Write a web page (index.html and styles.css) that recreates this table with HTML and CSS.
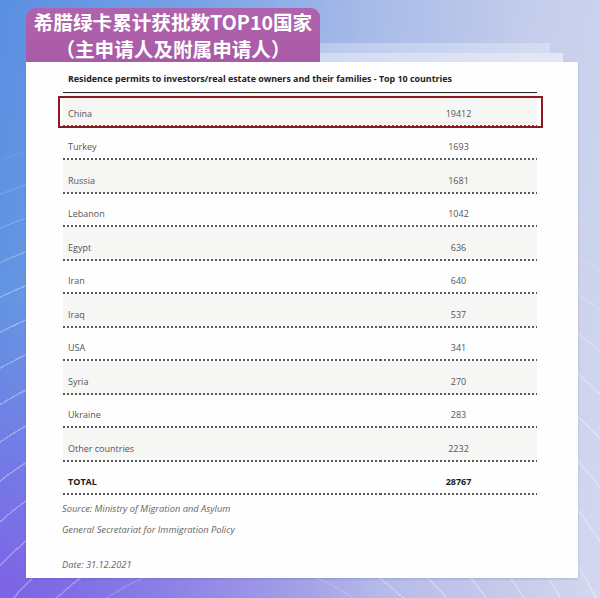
FILE: index.html
```html
<!doctype html>
<html>
  <head>
    <meta charset="UTF-8" />
    <title>希腊绿卡累计获批数TOP10国家</title>
    <link rel="stylesheet" href="styles.css">
  </head>
  <body>
    <div class="page">
      <div class="top">
        <div class="tab">
          <div>希腊绿卡累计获批数TOP10国家</div>
          <div>（主申请人及附属申请人）</div>
        </div>
        <div class="stack">
          <div class="sheet-back"></div>
          <div class="sheet-mid"></div>
        </div>
      </div>
      <div class="card">
        <div class="caption">Residence permits to investors/real estate owners and their families - Top 10 countries</div>
        <div class="table">
          <div class="row shade marked"><div class="cell">China</div><div class="cell num">19412</div></div>
          <div class="row"><div class="cell">Turkey</div><div class="cell num">1693</div></div>
          <div class="row shade"><div class="cell">Russia</div><div class="cell num">1681</div></div>
          <div class="row"><div class="cell">Lebanon</div><div class="cell num">1042</div></div>
          <div class="row shade"><div class="cell">Egypt</div><div class="cell num">636</div></div>
          <div class="row"><div class="cell">Iran</div><div class="cell num">640</div></div>
          <div class="row shade"><div class="cell">Iraq</div><div class="cell num">537</div></div>
          <div class="row"><div class="cell">USA</div><div class="cell num">341</div></div>
          <div class="row shade"><div class="cell">Syria</div><div class="cell num">270</div></div>
          <div class="row"><div class="cell">Ukraine</div><div class="cell num">283</div></div>
          <div class="row shade"><div class="cell">Other countries</div><div class="cell num">2232</div></div>
          <div class="row total"><div class="cell">TOTAL</div><div class="cell num">28767</div></div>
        </div>
        <div class="notes">
          <p>Source: Ministry of Migration and Asylum</p>
          <p>General Secretariat for Immigration Policy</p>
          <p class="date">Date: 31.12.2021</p>
        </div>
      </div>
    </div>
  </body>
</html>
```

FILE: styles.css
```css
html,
body {
  margin: 0;
  width: 600px;
  height: 598px;
  overflow: hidden;
}
body {
  position: relative;
  font-family: "Open Sans", "Noto Sans", Arial, sans-serif;
  background:
    radial-gradient(ellipse 380px 300px at 0% 100%, rgba(126, 92, 230, 0.9), rgba(126, 92, 230, 0) 100%),
    radial-gradient(ellipse 360px 160px at 40% 100%, rgba(170, 160, 228, 0.55), rgba(170, 160, 228, 0) 100%),
    linear-gradient(100deg, #5a8fe2 0%, #79a2e6 28%, #a7bae8 52%, #c4cdeb 76%, #d3d8ef 100%);
}
body::before {
  content: "";
  position: absolute;
  inset: 0;
  background: repeating-radial-gradient(circle at 230px 780px, rgba(255, 255, 255, 0) 0 30px, rgba(255, 255, 255, 0.3) 30px 31.5px);
  -webkit-mask-image: radial-gradient(circle at 230px 780px, transparent 180px, #000 260px, #000 520px, transparent 700px);
  mask-image: radial-gradient(circle at 230px 780px, transparent 180px, #000 260px, #000 520px, transparent 700px);
}
.page {
  position: relative;
  padding: 8px 0 0 26px;
}
.top {
  display: flex;
  align-items: flex-end;
}
.tab {
  width: 294px;
  height: 54px;
  background: linear-gradient(180deg, #b063ad, #a95aa6);
  border-radius: 9px 9px 0 0;
  color: white;
  text-align: center;
  font-family: "Noto Sans CJK SC", "Noto Sans", sans-serif;
  font-weight: 700;
  font-size: 19.6px;
  line-height: 27px;
}
.stack {
  display: flex;
  flex-direction: column;
}
.sheet-back {
  width: 230px;
  height: 10px;
  background: rgba(255, 255, 255, 0.28);
}
.sheet-mid {
  width: 243px;
  height: 9px;
  background: rgba(255, 255, 255, 0.5);
}
.card {
  width: 552px;
  height: 516px;
  box-sizing: border-box;
  padding: 0 41px 0 37px;
  background: #fefefe;
  box-shadow: 0 1px 2px rgba(60, 60, 100, 0.2);
}
.caption {
  padding: 11px 0 7px 5px;
  border-bottom: 1.5px solid #222;
  font-size: 8.9px;
  font-weight: 700;
  line-height: 12px;
  color: #222;
  white-space: nowrap;
}
.row {
  position: relative;
  display: grid;
  grid-template-columns: 317px 157px;
  height: 33.5px;
}
.shade {
  background: #f6f6f5;
}
.cell {
  display: flex;
  align-items: center;
  box-sizing: border-box;
  padding: 8px 0 0 5px;
  background: linear-gradient(to right, #5a5a5a 0 1.6px, transparent 1.6px) left bottom / 4px 1.6px repeat-x;
  font-size: 9px;
  line-height: 14px;
  color: #555;
}
.num {
  justify-content: center;
  padding-left: 0;
}
.marked::after {
  content: "";
  position: absolute;
  top: 3px;
  left: -5px;
  right: -6px;
  bottom: -1px;
  border: 2px solid #8a1a1e;
}
.total .cell {
  font-weight: 700;
  color: #222;
}
.notes {
  padding-top: 7px;
  margin-left: -1px;
}
.notes p {
  margin: 0 0 7px;
  font-size: 9.3px;
  font-style: italic;
  line-height: 14px;
  color: #666;
}
.notes .date {
  margin-top: 21px;
}
```
